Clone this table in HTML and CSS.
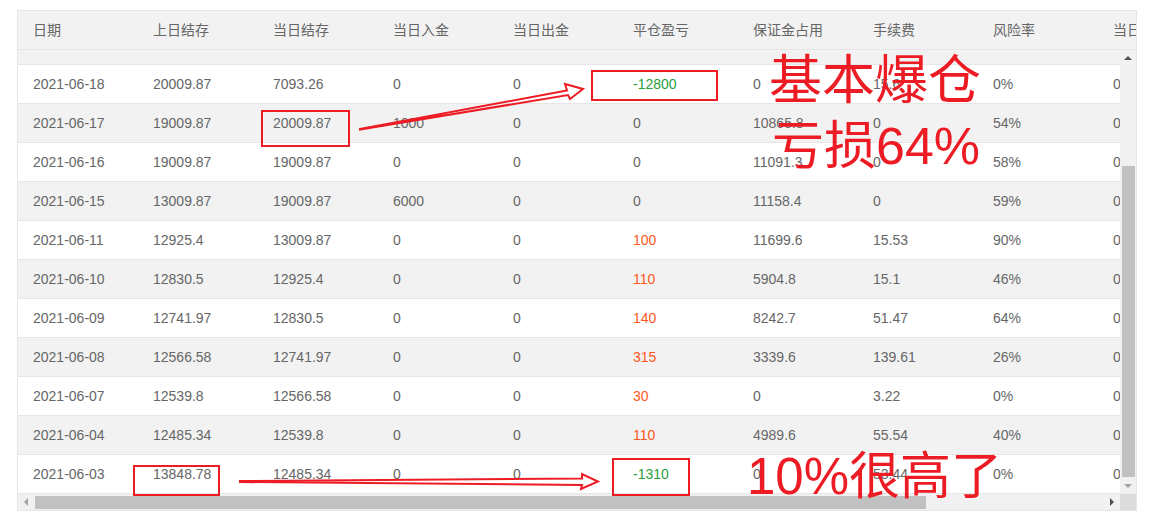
FILE: index.html
```html
<!DOCTYPE html>
<html lang="zh-CN">
<head>
<meta charset="utf-8">
<title>资金流水</title>
<link rel="stylesheet" href="styles.css">
</head>
<body>
<div class="panel">
  <div class="row head">
    <div class="cell">日期</div><div class="cell">上日结存</div><div class="cell">当日结存</div><div class="cell">当日入金</div><div class="cell">当日出金</div><div class="cell">平仓盈亏</div><div class="cell">保证金占用</div><div class="cell">手续费</div><div class="cell">风险率</div><div class="cell">当日盈亏</div>
  </div>
  <div class="bodywrap">
    <div class="body">
      <div class="strip"></div>
      <div class="row"><div class="cell">2021-06-18</div><div class="cell">20009.87</div><div class="cell">7093.26</div><div class="cell">0</div><div class="cell">0</div><div class="cell loss">-12800</div><div class="cell">0</div><div class="cell">15.6</div><div class="cell">0%</div><div class="cell">0</div></div>
      <div class="row alt"><div class="cell">2021-06-17</div><div class="cell">19009.87</div><div class="cell">20009.87</div><div class="cell">1000</div><div class="cell">0</div><div class="cell">0</div><div class="cell">10865.8</div><div class="cell">0</div><div class="cell">54%</div><div class="cell">0</div></div>
      <div class="row"><div class="cell">2021-06-16</div><div class="cell">19009.87</div><div class="cell">19009.87</div><div class="cell">0</div><div class="cell">0</div><div class="cell">0</div><div class="cell">11091.3</div><div class="cell">0</div><div class="cell">58%</div><div class="cell">0</div></div>
      <div class="row alt"><div class="cell">2021-06-15</div><div class="cell">13009.87</div><div class="cell">19009.87</div><div class="cell">6000</div><div class="cell">0</div><div class="cell">0</div><div class="cell">11158.4</div><div class="cell">0</div><div class="cell">59%</div><div class="cell">0</div></div>
      <div class="row"><div class="cell">2021-06-11</div><div class="cell">12925.4</div><div class="cell">13009.87</div><div class="cell">0</div><div class="cell">0</div><div class="cell gain">100</div><div class="cell">11699.6</div><div class="cell">15.53</div><div class="cell">90%</div><div class="cell">0</div></div>
      <div class="row alt"><div class="cell">2021-06-10</div><div class="cell">12830.5</div><div class="cell">12925.4</div><div class="cell">0</div><div class="cell">0</div><div class="cell gain">110</div><div class="cell">5904.8</div><div class="cell">15.1</div><div class="cell">46%</div><div class="cell">0</div></div>
      <div class="row"><div class="cell">2021-06-09</div><div class="cell">12741.97</div><div class="cell">12830.5</div><div class="cell">0</div><div class="cell">0</div><div class="cell gain">140</div><div class="cell">8242.7</div><div class="cell">51.47</div><div class="cell">64%</div><div class="cell">0</div></div>
      <div class="row alt"><div class="cell">2021-06-08</div><div class="cell">12566.58</div><div class="cell">12741.97</div><div class="cell">0</div><div class="cell">0</div><div class="cell gain">315</div><div class="cell">3339.6</div><div class="cell">139.61</div><div class="cell">26%</div><div class="cell">0</div></div>
      <div class="row"><div class="cell">2021-06-07</div><div class="cell">12539.8</div><div class="cell">12566.58</div><div class="cell">0</div><div class="cell">0</div><div class="cell gain">30</div><div class="cell">0</div><div class="cell">3.22</div><div class="cell">0%</div><div class="cell">0</div></div>
      <div class="row alt"><div class="cell">2021-06-04</div><div class="cell">12485.34</div><div class="cell">12539.8</div><div class="cell">0</div><div class="cell">0</div><div class="cell gain">110</div><div class="cell">4989.6</div><div class="cell">55.54</div><div class="cell">40%</div><div class="cell">0</div></div>
      <div class="row"><div class="cell">2021-06-03</div><div class="cell">13848.78</div><div class="cell">12485.34</div><div class="cell">0</div><div class="cell">0</div><div class="cell loss">-1310</div><div class="cell">0</div><div class="cell">53.44</div><div class="cell">0%</div><div class="cell">0</div></div>
    </div>
    <div class="vscroll">
      <div class="sbtn"><span class="tri up"></span></div>
      <div class="vtrack"><div class="vthumb"></div></div>
      <div class="sbtn"><span class="tri down"></span></div>
    </div>
  </div>
  <div class="hscroll">
    <div class="sbtn"><span class="tri left"></span></div>
    <div class="htrack"><div class="hthumb"></div></div>
    <div class="sbtn"><span class="tri right"></span></div>
    <div class="corner"></div>
  </div>
</div>

<svg class="marks" width="1150" height="519" viewBox="0 0 1150 519">
  <g fill="none" stroke="#ed1c24" stroke-width="2">
    <rect x="592" y="71" width="125" height="29"/>
    <rect x="262" y="111" width="87" height="35"/>
    <rect x="134" y="466" width="85" height="29"/>
    <rect x="613" y="459" width="76" height="36"/>
    <polygon stroke-linejoin="miter" points="360,129 567,90.5 565,84 583,89 570,99 568,95 360,129.5"/>
    <polygon stroke-linejoin="miter" points="240,481 582,478.5 582,474 598,481.5 581,489 582,485 240,482"/>
  </g>
</svg>
<div class="note n1">基本爆仓</div>
<div class="note n2">亏损64%</div>
<div class="note n3">10%很高了</div>
</body>
</html>
```

FILE: styles.css
```css
html, body {
  margin: 0;
  padding: 0;
  background: #fff;
}
body {
  position: relative;
  width: 1150px;
  height: 519px;
  overflow: hidden;
  font-family: "Liberation Sans", "Noto Sans CJK SC", sans-serif;
  font-size: 14px;
  color: #666;
}
.panel {
  margin: 10px 0 0 17px;
  width: 1120px;
  border: 1px solid #e6e6e6;
  box-sizing: border-box;
  overflow: hidden;
}
.row {
  display: flex;
  height: 38px;
  border-bottom: 1px solid #e6e6e6;
  background: #fff;
  white-space: nowrap;
}
.row.alt {
  background: #f2f2f2;
}
.row.head {
  background: #f2f2f2;
}
.cell {
  flex: 0 0 120px;
  box-sizing: border-box;
  padding-left: 15px;
  line-height: 38px;
}
.loss { color: #27a03a; }
.gain { color: #ff5722; }
.bodywrap {
  display: flex;
}
.body {
  flex: 0 0 1102px;
  overflow: hidden;
}
.strip {
  height: 14px;
  background: #f2f2f2;
  border-bottom: 1px solid #e6e6e6;
}
.vscroll {
  flex: 0 0 16px;
  display: flex;
  flex-direction: column;
  background: #f1f1f1;
}
.sbtn {
  flex: 0 0 16px;
  height: 16px;
  display: flex;
  align-items: center;
  justify-content: center;
}
.vtrack {
  flex: 1;
  padding-top: 100px;
  box-sizing: border-box;
}
.vthumb {
  margin-left: 2px;
  width: 13px;
  height: 311px;
  background: #c1c1c1;
}
.hscroll {
  display: flex;
  height: 16px;
  background: #f1f1f1;
}
.htrack {
  flex: 1;
  padding-top: 2px;
  padding-left: 1px;
  box-sizing: border-box;
}
.hthumb {
  width: 891px;
  height: 13px;
  background: #c1c1c1;
}
.corner {
  flex: 0 0 16px;
  background: #dcdcdc;
}
.tri {
  width: 0;
  height: 0;
  border-style: solid;
}
.tri.up {
  border-width: 0 4px 4px 4px;
  border-color: transparent transparent #505050 transparent;
}
.tri.down {
  border-width: 4px 4px 0 4px;
  border-color: #a3a3a3 transparent transparent transparent;
}
.tri.left {
  border-width: 4px 4px 4px 0;
  border-color: transparent #a3a3a3 transparent transparent;
}
.tri.right {
  border-width: 4px 0 4px 4px;
  border-color: transparent transparent transparent #505050;
}
.marks {
  position: absolute;
  left: 0;
  top: 0;
  pointer-events: none;
}
.note {
  position: absolute;
  color: #ed1c24;
  font-family: "Liberation Sans", "Noto Sans CJK SC", sans-serif;
  line-height: 1;
  white-space: nowrap;
}
.n1 { left: 769px; top: 54px; font-size: 53px; }
.n2 { left: 772px; top: 120px; font-size: 52px; }
.n3 { left: 747px; top: 451px; font-size: 51px; }
```
